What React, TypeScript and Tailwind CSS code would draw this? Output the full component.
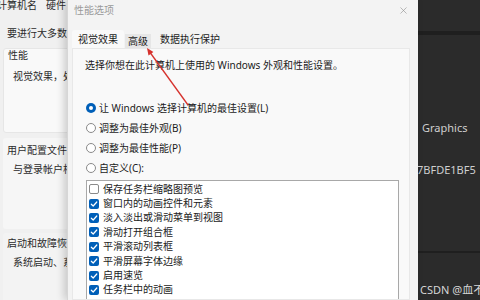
import { X } from 'lucide-react';

const FONT = { fontFamily: '"Noto Sans", "Noto Sans CJK SC", sans-serif' };

const RADIOS = [
  { label: '让 Windows 选择计算机的最佳设置(L)', checked: true },
  { label: '调整为最佳外观(B)', checked: false },
  { label: '调整为最佳性能(P)', checked: false },
  { label: '自定义(C):', checked: false },
];

const EFFECTS = [
  { label: '保存任务栏缩略图预览', checked: false },
  { label: '窗口内的动画控件和元素', checked: true },
  { label: '淡入淡出或滑动菜单到视图', checked: true },
  { label: '滑动打开组合框', checked: true },
  { label: '平滑滚动列表框', checked: true },
  { label: '平滑屏幕字体边缘', checked: true },
  { label: '启用速览', checked: true },
  { label: '任务栏中的动画', checked: true },
  { label: '在窗口下显示阴影', checked: true },
];

function Radio({ checked }: { checked: boolean }) {
  return checked ? (
    <span className="w-[10px] h-[10px] rounded-full bg-[#005fb8] flex items-center justify-center shrink-0">
      <span className="w-[4px] h-[4px] rounded-full bg-white" />
    </span>
  ) : (
    <span className="w-[10px] h-[10px] rounded-full border border-[#8a8a8a] bg-white shrink-0" />
  );
}

function Check({ checked }: { checked: boolean }) {
  return checked ? (
    <span className="w-[10px] h-[10px] rounded-[2px] bg-[#005fb8] flex items-center justify-center shrink-0">
      <svg width="8" height="8" viewBox="0 0 8 8" fill="none">
        <path d="M1.3 4.2 L3.2 6 L6.8 2" stroke="white" strokeWidth="1.2" strokeLinecap="round" strokeLinejoin="round" />
      </svg>
    </span>
  ) : (
    <span className="w-[10px] h-[10px] rounded-[2px] border border-[#8a8a8a] bg-white shrink-0" />
  );
}

export default function App() {
  return (
    <div className="relative w-[480px] h-[300px] overflow-hidden flex text-[10px] text-[#1b1b1b]" style={FONT}>
      {/* system properties window behind */}
      <div className="w-[67px] shrink-0 overflow-hidden bg-[#f0f0f0] text-[#2b2b2b]">
        <div className="w-[130px]">
          <div className="h-[15px] flex gap-[9px] -ml-[3px] leading-[10px] whitespace-nowrap">
            <span>计算机名</span>
            <span>硬件</span>
          </div>
          <p className="mt-[12px] pl-[7px] leading-[12px] whitespace-nowrap">要进行大多数更改，你必须作为管理员登录。</p>
          <div className="mt-[9px] ml-[3px] h-[85px] bg-[#f9f9f9] border border-[#e6e6e6] rounded-[3px]">
            <p className="pl-[4px] leading-[12px]">性能</p>
            <p className="mt-[9px] pl-[9px] leading-[12px] whitespace-nowrap">视觉效果，处理器计划</p>
          </div>
          <div className="mt-[5px] ml-[3px] h-[91px] bg-[#f6f6f6] rounded-[3px]">
            <p className="pt-[6px] pl-[4px] leading-[12px]">用户配置文件</p>
            <p className="mt-[7px] pl-[10px] leading-[12px] whitespace-nowrap">与登录帐户相关的桌面设置</p>
          </div>
          <div className="mt-[4px] ml-[3px] h-[80px] bg-[#f3f3f3] rounded-[3px]">
            <p className="pt-[4px] pl-[4px] leading-[12px]">启动和故障恢复</p>
            <p className="mt-[7px] pl-[10px] leading-[12px] whitespace-nowrap">系统启动、系统故障和调试信息</p>
          </div>
        </div>
      </div>

      {/* performance options dialog */}
      <div className="w-[351px] shrink-0 bg-[#f3f3f3] flex flex-col shadow-[-3px_0_8px_rgba(0,0,0,0.18)] border-l border-[#d6d6d6] z-10">
        <div className="h-[21px] shrink-0 flex items-center justify-between pl-[6px] pr-[9px]">
          <span className="text-[#9a9a9a]">性能选项</span>
          <X className="w-[11px] h-[11px] text-[#8c8c8c]" strokeWidth={1.3} />
        </div>
        <div className="mt-[9px] h-[18px] shrink-0 flex items-end pl-[4px]">
          <div className="h-[18px] px-[6px] bg-[#f9f9f9] rounded-t-[3px] flex items-center">视觉效果</div>
          <div className="h-[14px] ml-[1px] px-[3px] bg-[#e6e6e6] flex items-center">高级</div>
          <div className="h-[18px] ml-[9px] flex items-center">数据执行保护</div>
        </div>
        <div className="flex-1 min-h-0 overflow-hidden ml-[4px] mr-[8px] bg-[#f9f9f9] border border-[#e8e8e8]">
          <p className="pt-[10px] pl-[12px] leading-[12px] whitespace-nowrap">选择你想在此计算机上使用的 Windows 外观和性能设置。</p>
          <div className="mt-[27px] pl-[13px]">
            {RADIOS.map(r => (
              <div key={r.label} className="h-[20px] flex items-center gap-[3px] whitespace-nowrap">
                <Radio checked={r.checked} />
                <span>{r.label}</span>
              </div>
            ))}
          </div>
          <div className="mt-[2px] ml-[13px] mr-[10px] bg-white border border-[#a8a8a8] pt-[1px] pl-[2px]">
            {EFFECTS.map(e => (
              <div key={e.label} className="h-[14.4px] flex items-center gap-[4px] whitespace-nowrap">
                <Check checked={e.checked} />
                <span>{e.label}</span>
              </div>
            ))}
          </div>
        </div>
      </div>

      {/* dark window on the right */}
      <div className="flex-1 bg-[#2b2b2b] flex flex-col text-[#cfcfcf] text-[11px] whitespace-nowrap overflow-hidden">
        <div className="h-[31px] shrink-0" />
        <div className="h-[4px] shrink-0 bg-[#1f1f1f]" />
        <p className="mt-[86px] pl-[4px] leading-[14px]">Graphics</p>
        <p className="mt-[28px] leading-[14px] -ml-[1px]">7BFDE1BF5</p>
        <div className="mt-[74px] h-[2px] shrink-0 bg-[#1f1f1f]" />
        <p className="mt-[30px] pl-[2px] leading-[14px] text-[#d6d6d6]">CSDN @血不热</p>
      </div>

      {/* red annotation arrow */}
      <svg className="absolute inset-0 pointer-events-none z-20" width="480" height="300">
        <line x1="188" y1="105" x2="149" y2="51" stroke="#d6322d" strokeWidth="1.3" />
        <polygon points="147,48 153.4,52.1 148.5,55.5" fill="#d6322d" />
      </svg>
    </div>
  );
}
